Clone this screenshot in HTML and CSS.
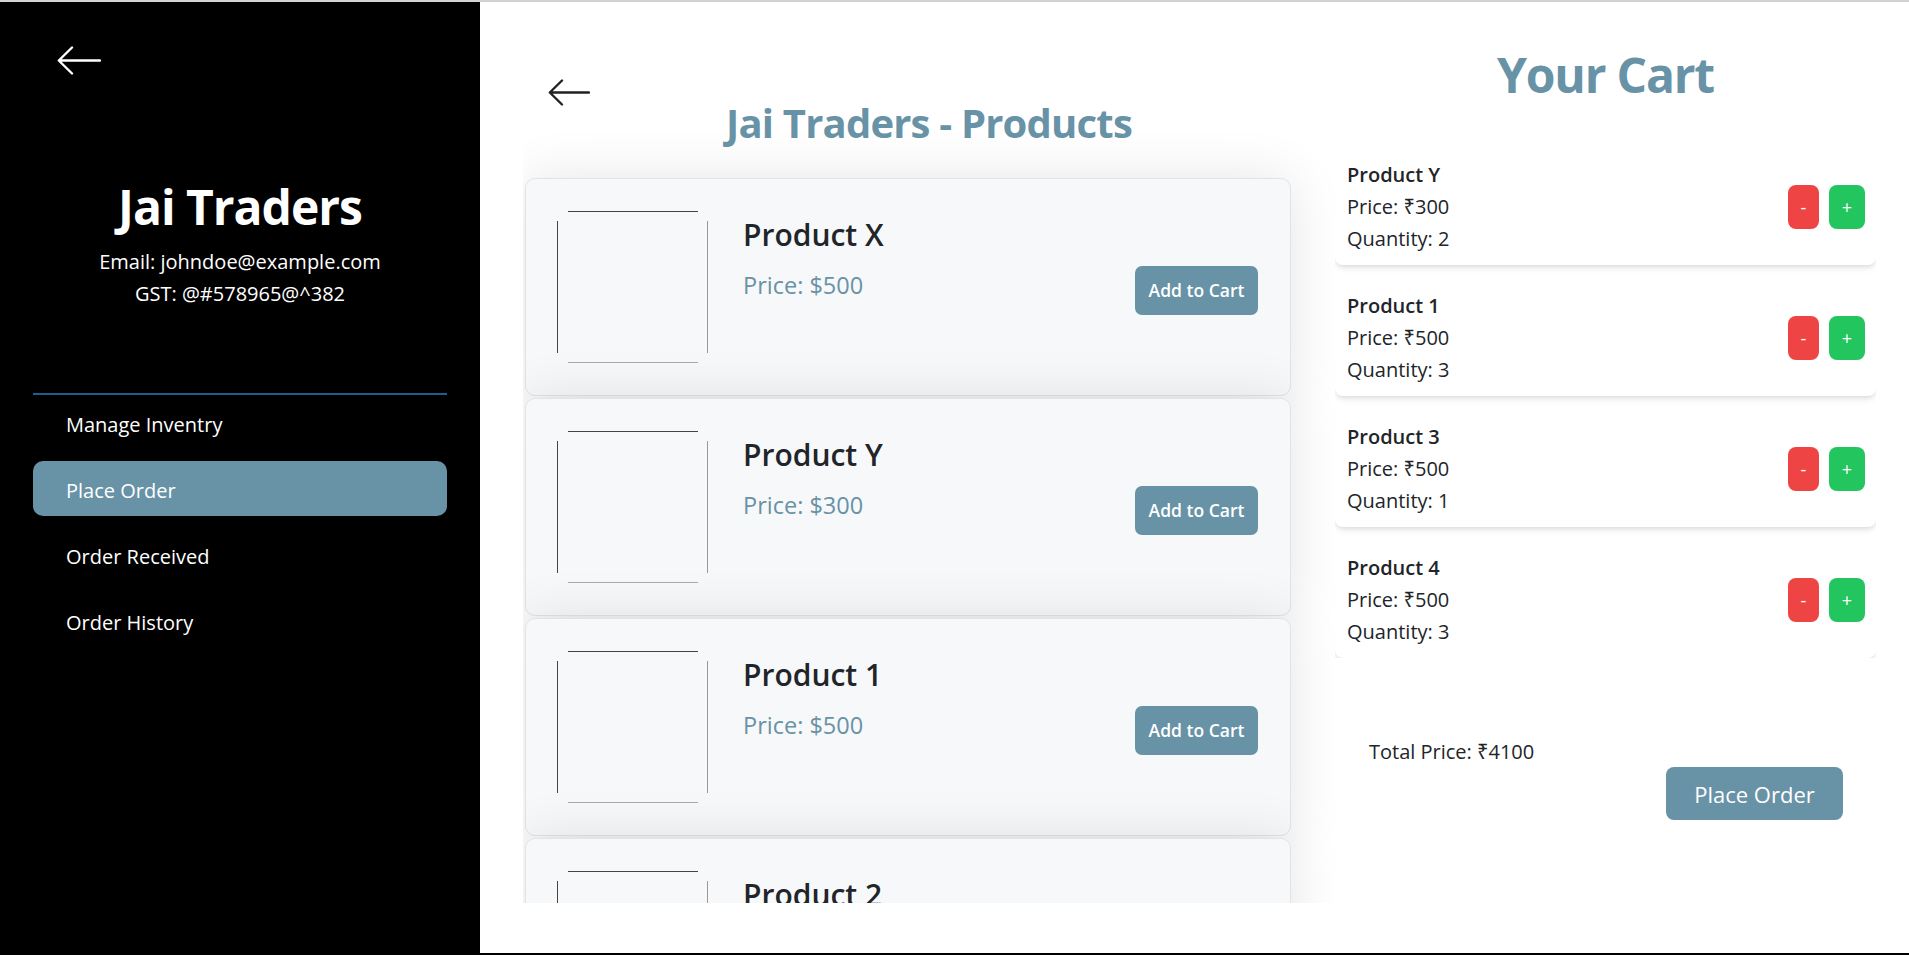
FILE: index.html
```html
<!DOCTYPE html>
<html lang="en">
<head>
<meta charset="utf-8">
<title>Jai Traders - Place Order</title>
<link rel="stylesheet" href="styles.css">
</head>
<body>
<div class="app">
  <aside class="sidebar">
    <div class="side-back">
      <svg width="44" height="29" viewBox="0 0 44 29" fill="none" stroke="#fff" stroke-width="2.4" stroke-linecap="round" stroke-linejoin="round"><path d="M43 14.5H2M15 1.5L1.8 14.5L15 27.5"/></svg>
    </div>
    <div class="profile">
      <h1 class="profile-name">Jai Traders</h1>
      <p class="profile-line">Email: johndoe@example.com</p>
      <p class="profile-line">GST: @#578965@^382</p>
    </div>
    <nav class="side-nav">
      <a class="nav-item">Manage Inventry</a>
      <a class="nav-item active">Place Order</a>
      <a class="nav-item">Order Received</a>
      <a class="nav-item">Order History</a>
    </nav>
  </aside>

  <main class="main">
    <section class="products">
      <div class="main-back">
        <svg width="42" height="27" viewBox="0 0 42 27" fill="none" stroke="#222" stroke-width="2.4" stroke-linecap="round" stroke-linejoin="round"><path d="M41 13.5H2M14 1.5L1.8 13.5L14 25.5"/></svg>
      </div>
      <h2 class="products-title">Jai Traders - Products</h2>
      <div class="product-list">
        <div class="product-card">
          <div class="thumb"></div>
          <div class="info">
            <h3 class="pname">Product X</h3>
            <p class="pprice">Price: $500</p>
          </div>
          <button class="add-btn">Add to Cart</button>
        </div>
        <div class="product-card">
          <div class="thumb"></div>
          <div class="info">
            <h3 class="pname">Product Y</h3>
            <p class="pprice">Price: $300</p>
          </div>
          <button class="add-btn">Add to Cart</button>
        </div>
        <div class="product-card">
          <div class="thumb"></div>
          <div class="info">
            <h3 class="pname">Product 1</h3>
            <p class="pprice">Price: $500</p>
          </div>
          <button class="add-btn">Add to Cart</button>
        </div>
        <div class="product-card">
          <div class="thumb"></div>
          <div class="info">
            <h3 class="pname">Product 2</h3>
            <p class="pprice">Price: $500</p>
          </div>
          <button class="add-btn">Add to Cart</button>
        </div>
      </div>
    </section>

    <section class="cart">
      <h2 class="cart-title">Your Cart</h2>
      <div class="cart-list">
        <div class="cart-item">
          <div class="ci-text">
            <p class="ci-name">Product Y</p>
            <p class="ci-line">Price: ₹300</p>
            <p class="ci-line">Quantity: 2</p>
          </div>
          <div class="qty-btns"><button class="qbtn minus">-</button><button class="qbtn plus">+</button></div>
        </div>
        <div class="cart-item">
          <div class="ci-text">
            <p class="ci-name">Product 1</p>
            <p class="ci-line">Price: ₹500</p>
            <p class="ci-line">Quantity: 3</p>
          </div>
          <div class="qty-btns"><button class="qbtn minus">-</button><button class="qbtn plus">+</button></div>
        </div>
        <div class="cart-item">
          <div class="ci-text">
            <p class="ci-name">Product 3</p>
            <p class="ci-line">Price: ₹500</p>
            <p class="ci-line">Quantity: 1</p>
          </div>
          <div class="qty-btns"><button class="qbtn minus">-</button><button class="qbtn plus">+</button></div>
        </div>
        <div class="cart-item">
          <div class="ci-text">
            <p class="ci-name">Product 4</p>
            <p class="ci-line">Price: ₹500</p>
            <p class="ci-line">Quantity: 3</p>
          </div>
          <div class="qty-btns"><button class="qbtn minus">-</button><button class="qbtn plus">+</button></div>
        </div>
      </div>
      <p class="total">Total Price: ₹4100</p>
      <div class="order-row"><button class="order-btn">Place Order</button></div>
    </section>
  </main>
</div>
</body>
</html>
```

FILE: styles.css
```css
html, body {
  margin: 0;
  padding: 0;
  background: #fff;
}

body {
  font-family: "Open Sans", "Noto Sans", "DejaVu Sans", sans-serif;
  color: #212529;
}

.app {
  display: flex;
  height: 955px;
  box-sizing: border-box;
  border-top: 2px solid #d2d2d2;
  border-bottom: 2px solid #000;
  overflow: hidden;
}

/* ---------- sidebar ---------- */
.sidebar {
  width: 480px;
  flex: none;
  background: #000;
  color: #fff;
}

.side-back {
  margin: 44px 0 0 57px;
  height: 29px;
}

.side-back svg,
.main-back svg {
  display: block;
}

.profile {
  text-align: center;
}

.profile-name {
  margin: 102px 0 0;
  font-size: 48px;
  line-height: 60px;
  font-weight: 700;
  letter-spacing: -1px;
}

.profile-line {
  margin: 0;
  font-size: 20px;
  line-height: 32px;
}

.profile-name + .profile-line {
  margin-top: 9px;
}

.side-nav {
  margin: 83px 33px 0;
  border-top: 2px solid #1f5d8c;
}

.nav-item {
  display: block;
  height: 55px;
  box-sizing: border-box;
  padding: 15px 0 0 33px;
  margin-bottom: 11px;
  font-size: 20px;
  line-height: 30px;
  color: #fff;
  border-radius: 10px;
}

.nav-item.active {
  background: #6892a6;
}

/* ---------- main ---------- */
.main {
  flex: 1;
  min-width: 0;
  display: flex;
  padding: 0 33px 0 43px;
}

.products {
  width: 812px;
  flex: none;
  height: 901px;
  overflow: hidden;
}

.main-back {
  margin: 77px 0 0 25px;
  height: 27px;
}

.products-title {
  margin: -7px 0 0;
  text-align: center;
  font-size: 40px;
  line-height: 48px;
  font-weight: 700;
  letter-spacing: -0.8px;
  color: #6892a6;
}

.product-list {
  margin: 31px 0 0 2px;
  width: 766px;
}

.product-card {
  display: flex;
  align-items: center;
  box-sizing: border-box;
  padding: 32px 32px 32px 31px;
  margin-bottom: 2px;
  background: #f7f8fa;
  border: 1px solid #e0e3e8;
  border-radius: 10px;
  box-shadow: 0 2px 55px rgba(0, 0, 0, 0.11);
}

.thumb {
  width: 151px;
  height: 152px;
  flex: none;
  margin-right: 35px;
  background:
    linear-gradient(#444, #444) 11px 0 / calc(100% - 21px) 1px no-repeat,
    linear-gradient(#aaa, #aaa) 11px 100% / calc(100% - 21px) 1px no-repeat,
    linear-gradient(#444, #444) 0 10px / 1px calc(100% - 20px) no-repeat,
    linear-gradient(#999, #999) 100% 10px / 1px calc(100% - 20px) no-repeat;
}

.info {
  flex: 1;
  align-self: flex-start;
}

.pname {
  margin: 4px 0 14px;
  font-size: 30px;
  line-height: 40px;
  font-weight: 600;
  color: #212529;
}

.pprice {
  margin: 0;
  font-size: 23.5px;
  line-height: 32px;
  color: #6892a6;
}

.add-btn {
  width: 123px;
  height: 49px;
  margin-top: 6px;
  flex: none;
  border: none;
  border-radius: 7px;
  background: #6892a6;
  color: #fff;
  font-family: inherit;
  font-size: 17.5px;
  font-weight: 600;
  padding: 0;
}

/* ---------- cart ---------- */
.cart {
  width: 541px;
  flex: none;
}

.cart-title {
  margin: 44px 0 0;
  text-align: center;
  font-size: 48px;
  line-height: 58px;
  font-weight: 700;
  letter-spacing: -1.2px;
  color: #6892a6;
}

.cart-list {
  margin-top: 41px;
  height: 513px;
  overflow: hidden;
  display: flex;
  flex-direction: column;
  gap: 11px;
}

.cart-item {
  flex: none;
  height: 120px;
  box-sizing: border-box;
  display: flex;
  align-items: center;
  justify-content: space-between;
  padding: 14px 11px 10px 12px;
  background: #fff;
  border-radius: 8px;
  box-shadow: 0 4px 6px -1px rgba(0, 0, 0, 0.1), 0 2px 4px -1px rgba(0, 0, 0, 0.06);
}

.ci-text {
  align-self: flex-start;
}

.ci-name,
.ci-line {
  margin: 0;
  font-size: 20px;
  line-height: 32px;
  color: #212529;
}

.ci-name {
  font-weight: 600;
}

.qty-btns {
  display: flex;
  gap: 10px;
}

.qbtn {
  height: 44px;
  border: none;
  border-radius: 8px;
  color: #fff;
  font-family: inherit;
  font-size: 18px;
  padding: 0;
}

.qbtn.minus {
  width: 31px;
  background: #ef4444;
}

.qbtn.plus {
  width: 36px;
  background: #22c55e;
}

.total {
  margin: 79px 0 0 34px;
  font-size: 20px;
  line-height: 30px;
  color: #212529;
}

.order-row {
  display: flex;
  justify-content: flex-end;
  padding-right: 33px;
}

.order-btn {
  width: 177px;
  height: 53px;
  border: none;
  border-radius: 8px;
  background: #6892a6;
  color: #fff;
  font-family: inherit;
  font-size: 22px;
  padding: 0;
}
```
